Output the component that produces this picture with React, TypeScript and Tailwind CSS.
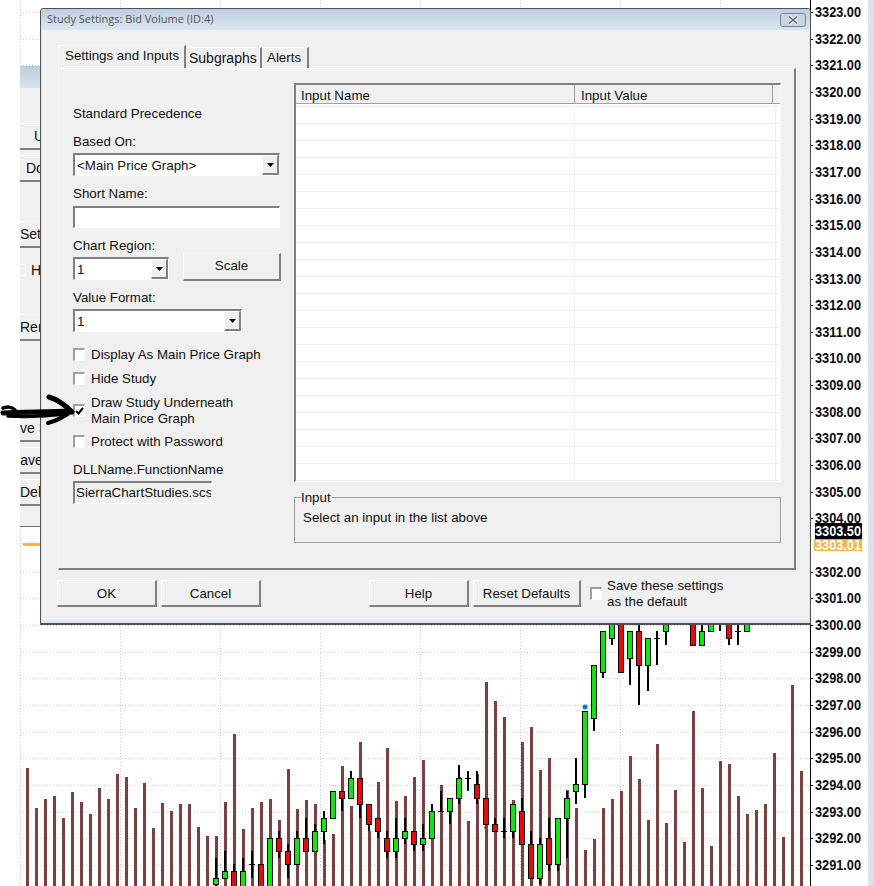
// Study Settings dialog on top of a price chart
const FONT = "font-['Liberation_Sans',Arial,sans-serif]";
const raised = "border-t border-l border-t-white border-l-white border-b-2 border-r-2 border-b-[#808080] border-r-[#808080]";
const sunken = "border-t-2 border-l-2 border-t-[#808080] border-l-[#808080] border-b border-r border-b-white border-r-white";

const volumeTops = [
  768, 808, 799, 796, 818, 792, 802, 814, 788, 799, 774, 777, 808, 783, 828, 803, 811, 804, 804, 827, 836, 836, 802, 734,
  829, 808, 802, 799, 820, 769, 809, 800, 804, 840, 834, 766, 806, 742, 831, 782, 748, 801, 796, 777, 760, 838, 785, 810,
  777, 821, 774, 682, 701, 717, 800, 742, 727, 770, 758, 860, 790, 808, 850, 839, 808, 799, 791, 756, 779, 820, 744, 823,
  790, 842, 711, 788, 846, 761, 764, 796, 814, 810, 804, 753, 837, 685, 771,
];

// x, wick top, wick bottom, body top, body bottom, colour ("d" = doji line)
type Candle = [number, number, number, number, number, "g" | "r" | "d"];
const candles: Candle[] = [
  [216, 858, 886, 878, 884, "g"], [225, 851, 878, 871, 878, "g"], [234, 864, 886, 871, 890, "r"], [243, 858, 886, 871, 890, "g"],
  [252, 851, 878, 864, 864, "d"], [261, 864, 886, 864, 890, "r"], [270, 838, 886, 838, 890, "g"], [279, 831, 858, 838, 851, "r"],
  [288, 844, 878, 851, 864, "r"], [297, 831, 864, 838, 864, "g"], [306, 818, 851, 838, 851, "r"], [315, 824, 851, 831, 851, "g"],
  [324, 811, 844, 818, 831, "g"], [333, 791, 818, 791, 818, "g"], [342, 791, 811, 791, 798, "r"], [351, 771, 798, 778, 798, "g"],
  [360, 778, 818, 778, 804, "r"], [369, 804, 831, 804, 824, "r"], [378, 818, 838, 818, 831, "r"], [387, 831, 858, 838, 851, "r"],
  [396, 818, 858, 838, 851, "g"], [405, 818, 844, 831, 838, "g"], [414, 831, 851, 831, 844, "r"], [423, 824, 851, 838, 844, "g"],
  [432, 804, 838, 811, 838, "g"], [441, 791, 811, 811, 811, "d"], [450, 798, 824, 798, 811, "g"], [459, 765, 804, 778, 798, "g"],
  [468, 771, 791, 778, 778, "d"], [477, 771, 804, 784, 798, "r"], [486, 798, 824, 798, 824, "r"], [495, 818, 831, 824, 831, "r"],
  [504, 818, 838, 831, 831, "d"], [513, 804, 838, 804, 831, "g"], [522, 798, 844, 811, 844, "r"], [531, 831, 878, 844, 878, "r"],
  [540, 838, 884, 844, 878, "g"], [549, 818, 871, 838, 864, "r"], [558, 818, 871, 818, 864, "g"], [567, 791, 858, 798, 818, "g"],
  [576, 758, 804, 784, 791, "g"], [585, 711, 798, 711, 784, "g"], [594, 665, 731, 665, 718, "g"], [603, 631, 678, 631, 672, "g"],
  [612, 620, 645, 620, 638, "g"], [621, 620, 672, 620, 672, "r"], [630, 631, 685, 631, 658, "g"], [639, 620, 705, 631, 665, "r"],
  [648, 638, 691, 638, 665, "g"], [657, 631, 665, 638, 638, "d"], [666, 620, 645, 620, 631, "g"], [693, 620, 645, 620, 645, "r"],
  [702, 620, 645, 631, 645, "g"], [711, 620, 631, 620, 631, "g"], [720, 620, 631, 620, 620, "d"], [729, 620, 645, 620, 638, "r"],
  [738, 625, 645, 631, 631, "d"], [747, 620, 631, 620, 631, "g"],
];

const priceY = (n: number) => 12 + n * 26.65;
const prices = Array.from({ length: 33 }, (_, n) => 3323 - n);
const SCALE_FONT = "'Liberation Sans', Arial, sans-serif";

function Chart() {
  return (
    <svg className="absolute inset-0" width={874} height={886} viewBox="0 0 874 886">
      {prices.map((p, n) => (
        <line key={p} x1={20} x2={810} y1={Math.round(priceY(n)) + 0.5} y2={Math.round(priceY(n)) + 0.5} stroke="#cfcfcf" strokeDasharray="1 2" />
      ))}
      {[20, 120, 220, 320, 420, 520, 620, 720].map((x) => (
        <line key={x} x1={x + 0.5} x2={x + 0.5} y1={0} y2={886} stroke="#cfcfcf" strokeDasharray="1 2" />
      ))}
      {volumeTops.map((top, i) => (
        <rect key={i} x={26 + i * 9} y={top} width={3} height={886 - top} fill="#7f3f3f" />
      ))}
      {candles.map(([x, wt, wb, bt, bb, c]) => (
        <g key={x}>
          <rect x={x - 1} y={wt} width={2} height={wb - wt} fill="#000" />
          {c === "d" ? (
            <rect x={x - 3} y={bt} width={6} height={1} fill="#000" />
          ) : (
            <rect x={x - 2.5} y={bt + 0.5} width={5} height={bb - bt} fill={c === "g" ? "#00f000" : "#ff0000"} stroke="#000" />
          )}
        </g>
      ))}
      <circle cx={585} cy={707} r={2.5} fill="#0080c0" />
      <circle cx={486} cy={827.5} r={2} fill="#7f3f3f" />
      <rect x={23} y={543} width={30} height={3} fill="#ffb050" />
      {/* price scale */}
      <rect x={810} y={0} width={1} height={886} fill="#000" />
      {prices.map((p, n) =>
        p === 3303 ? null : (
          <g key={p}>
            <rect x={811} y={Math.round(priceY(n))} width={2} height={1} fill="#000" />
            <text x={815} y={priceY(n) + 5} fontSize={14} textLength={46} lengthAdjust="spacingAndGlyphs" fontWeight={700} fill="#0a0a14" fontFamily={SCALE_FONT}>
              {p}.00
            </text>
          </g>
        ),
      )}
      <rect x={815} y={523} width={47} height={16} fill="#000" />
      <text x={815} y={536} fontSize={14} textLength={46} lengthAdjust="spacingAndGlyphs" fontWeight={700} fill="#fff" fontFamily={SCALE_FONT}>3303.50</text>
      <rect x={814} y={539} width={48} height={12} fill="#ffb050" />
      <text x={815} y={550} fontSize={14} textLength={46} lengthAdjust="spacingAndGlyphs" fontWeight={700} fill="#fff" fontFamily={SCALE_FONT}>3303.01</text>
      <rect x={868} y={0} width={2} height={886} fill="#e4e4e4" />
      <rect x={870} y={0} width={4} height={886} fill="#d3e1f0" />
    </svg>
  );
}

function SideButton({ label, top, inset = "" }: { label: string; top: number; inset?: string }) {
  return (
    <div style={{ top }} className="absolute left-0 w-[20px] h-[27px] overflow-hidden border-t border-t-white border-b-2 border-b-[#808080]">
      <span className={`block whitespace-nowrap leading-[24px] ${inset}`}>{label}</span>
    </div>
  );
}

function SidePanel() {
  return (
    <div className={`absolute left-[20px] top-[66px] w-[21px] h-[461px] bg-[#f0f0f0] border-b border-b-[#707070] text-[14px] text-[#111] ${FONT}`}>
      <div className="h-[22px] bg-linear-to-b from-[#bccede] to-[#d6e3ee]" />
      <div className="relative">
        <SideButton label="U" top={35} inset="ml-[14px]" />
        <SideButton label="Do" top={67} inset="ml-[6px]" />
        <SideButton label="Set" top={133} />
        <div className="absolute left-0 top-[176px] w-[6px] h-[12px] border-r border-y border-white" />
        <span className="absolute left-[11px] top-[172px] leading-[20px]">H</span>
        <SideButton label="Ren" top={226} />
        <SideButton label="ve S" top={327} />
        <SideButton label="Save" top={359} inset="ml-[-9px]" />
        <SideButton label="Dele" top={391} />
      </div>
    </div>
  );
}

function Combo({ value, width }: { value: string; width: string }) {
  return (
    <div className={`${width} h-[23px] bg-white flex items-center justify-between ${sunken}`}>
      <span className="pl-[2px] pt-[1px] leading-[16px]">{value}</span>
      <div className={`w-[17px] h-full bg-[#f0f0f0] flex items-center justify-center ${raised}`}>
        <svg width={7} height={4} viewBox="0 0 7 4">
          <path d="M0 0h7L3.5 4z" fill="#000" />
        </svg>
      </div>
    </div>
  );
}

function CheckBox({ checked = false }: { checked?: boolean }) {
  return (
    <div className={`w-[12px] h-[13px] shrink-0 bg-white flex items-center justify-center ${sunken} border-t-[#a0a0a0] border-l-[#a0a0a0]`}>
      {checked && (
        <svg width={9} height={8} viewBox="0 0 9 8">
          <path d="M1 4l2.5 2.5L8 1" fill="none" stroke="#000" strokeWidth={2} />
        </svg>
      )}
    </div>
  );
}

function Check({ label, className = "", checked = false }: { label: string; className?: string; checked?: boolean }) {
  return (
    <div className={`flex items-center gap-[6px] h-[16px] leading-[16px] ${className}`}>
      <CheckBox checked={checked} />
      <span className="pt-[1px]">{label}</span>
    </div>
  );
}

function LeftColumn() {
  return (
    <div className="w-[208px] shrink-0 pt-[36px] leading-[18px]">
      <div className="h-[16px]">Standard Precedence</div>
      <div className="h-[16px] mt-[12px]">Based On:</div>
      <div className="mt-[4px]">
        <Combo value="<Main Price Graph>" width="w-[207px]" />
      </div>
      <div className="h-[16px] mt-[9px]">Short Name:</div>
      <div className={`w-[207px] h-[22px] mt-[5px] bg-white ${sunken}`} />
      <div className="h-[16px] mt-[9px]">Chart Region:</div>
      <div className="h-[28px] flex justify-between">
        <div className="mt-[4px]">
          <Combo value="1" width="w-[96px]" />
        </div>
        <button className={`w-[98px] h-[28px] pb-[1px] ${raised}`}>Scale</button>
      </div>
      <div className="h-[16px] mt-[8px]">Value Format:</div>
      <div className="mt-[4px]">
        <Combo value="1" width="w-[169px]" />
      </div>
      <Check label="Display As Main Price Graph" className="mt-[14px]" />
      <Check label="Hide Study" className="mt-[8px]" />
      <div className="flex items-center gap-[6px] h-[32px] mt-[8px] leading-[16px]">
        <CheckBox checked />
        <span className="pt-[1px]">
          Draw Study Underneath
          <br />
          Main Price Graph
        </span>
      </div>
      <Check label="Protect with Password" className="mt-[7px]" />
      <div className="h-[16px] mt-[12px]">DLLName.FunctionName</div>
      <div className={`w-[139px] h-[23px] mt-[4px] pl-[1px] overflow-hidden whitespace-nowrap leading-[19px] ${sunken}`}>
        SierraChartStudies.scsf
      </div>
    </div>
  );
}

function InputList() {
  return (
    <div className={`w-[487px] h-[399px] bg-white overflow-hidden ${sunken}`}>
      <div className="h-[19px] flex bg-[#f0f0f0] border-b border-b-[#a0a0a0] leading-[21px]">
        <div className="w-[279px] pl-[5px] border-r border-r-[#a0a0a0]">Input Name</div>
        <div className="w-[198px] pl-[6px] border-r border-r-[#a0a0a0]">Input Value</div>
      </div>
      <div className="h-[3px] border-b border-b-[#f0f0f0]" />
      {Array.from({ length: 22 }, (_, i) => (
        <div key={i} className="h-[17px] flex border-b border-b-[#f0f0f0]">
          <div className="w-[279px] border-r border-r-[#f4f4f4]" />
          <div className="w-[201px] border-r border-r-[#f0f0f0]" />
        </div>
      ))}
    </div>
  );
}

function Dialog() {
  return (
    <div className={`absolute left-[40px] top-[8px] w-[771px] h-[617px] flex flex-col rounded-t-[4px] border border-[#505050] border-b-2 bg-[#f0f0f0] text-[13.33px] text-[#111] ${FONT}`}>
      <div className="h-[21px] shrink-0 flex items-center justify-between pl-[6px] pr-[4px] rounded-t-[3px] bg-linear-to-b from-[#bccede] to-[#dbe7f1]">
        <span className="font-['Open_Sans',sans-serif] text-[11px] text-[#555]">Study Settings: Bid Volume (ID:4)</span>
        <div className="w-[26px] h-[14px] mt-[1px] rounded-[3px] border border-[#788494] bg-[#c9d5e2] flex items-center justify-center">
          <svg width={12} height={10} viewBox="0 0 12 10">
            <path d="M2 1.5l8 7M10 1.5l-8 7" stroke="#fff" strokeWidth={3.5} />
            <path d="M2 1.5l8 7M10 1.5l-8 7" stroke="#5a6470" strokeWidth={1.5} />
          </svg>
        </div>
      </div>
      <div className="flex-1 border-x border-x-[#dce6f0] border-b-[3px] border-b-[#dce6f0] flex flex-col">
        <div className="pl-[16px] pt-[15px]">
          <div className="h-[23px] flex items-end whitespace-nowrap">
            <div className="w-[128px] h-[23px] pl-[6px] leading-[20px] border-t border-l border-white border-r-2 border-r-[#808080]">Settings and Inputs</div>
            <div className="w-[75px] h-[21px] pl-[2px] leading-[20px] ml-[1px] border-t border-white border-r-2 border-r-[#808080] text-[14px]">Subgraphs</div>
            <div className="w-[47px] h-[21px] pl-[5px] leading-[20px] border-t border-white border-r-2 border-r-[#808080]">Alerts</div>
          </div>
          <div className="w-[738px] h-[502px] flex pl-[14px] border-t border-l border-t-white border-l-white border-r-2 border-b-2 border-r-[#808080] border-b-[#808080]">
            <LeftColumn />
            <div className="pl-[13px] pt-[14px]">
              <InputList />
              <fieldset className="w-[487px] h-[54px] mt-[7px] border border-[#a0a0a0] pl-[8px] leading-[18px]">
                <legend className="ml-[-2px] pr-[1px] leading-[16px] pt-[1px]">Input</legend>
                <div className="mt-[3px]">Select an input in the list above</div>
              </fieldset>
            </div>
          </div>
        </div>
        <div className="flex mt-[10px] pl-[15px] leading-[16px]">
          <button className={`w-[100px] h-[27px] pt-[1px] ${raised}`}>OK</button>
          <button className={`w-[100px] h-[27px] pt-[1px] ml-[4px] ${raised}`}>Cancel</button>
          <button className={`w-[100px] h-[27px] pt-[1px] ml-[108px] ${raised}`}>Help</button>
          <button className={`w-[108px] h-[27px] pt-[1px] ml-[4px] ${raised}`}>Reset Defaults</button>
          <div className="flex items-center gap-[5px] ml-[9px] h-[27px]">
            <CheckBox />
            <span>
              Save these settings
              <br />
              as the default
            </span>
          </div>
        </div>
      </div>
    </div>
  );
}

function Arrow() {
  return (
    <svg className="absolute left-0 top-[390px]" width={80} height={40} viewBox="0 0 80 40">
      <g fill="none" stroke="#000" strokeLinecap="round" strokeLinejoin="round">
        <path d="M3 18c4-1 8-2 12 2" strokeWidth={3.5} />
        <path d="M3 23c20-1 46-1 68-2" strokeWidth={5} />
        <path d="M8 26c20 1 40 0 58-2" strokeWidth={3.5} />
        <path d="M49 7c10 3 17 9 23 15" strokeWidth={5} />
        <path d="M48 33c8-2 17-7 24-12" strokeWidth={4} />
      </g>
    </svg>
  );
}

export default function App() {
  return (
    <div className="relative w-[874px] h-[886px] overflow-hidden bg-white">
      <Chart />
      <SidePanel />
      <Dialog />
      <Arrow />
    </div>
  );
}
